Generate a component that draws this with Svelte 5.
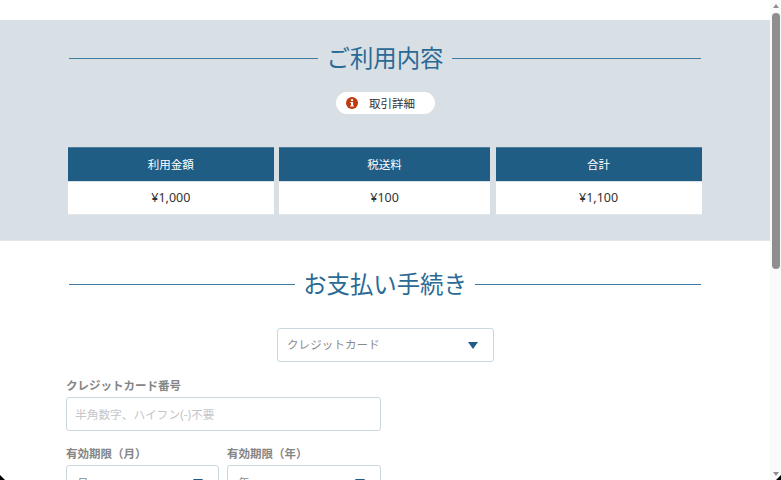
<script>
  const cells = [
    { head: '利用金額', value: '¥1,000' },
    { head: '税送料', value: '¥100' },
    { head: '合計', value: '¥1,100' }
  ];
</script>

<div class="window">
  <main class="page">
    <section class="summary">
      <h2 class="title"><span>ご利用内容</span></h2>
      <div class="pill-row">
        <button class="pill">
          <svg width="12" height="12" viewBox="0 0 12 12" aria-hidden="true">
            <circle cx="6" cy="6" r="6" fill="#c0390f" />
            <rect x="4.9" y="2.2" width="2.2" height="1.9" fill="#fff" />
            <path d="M4.2 5h2.9v3.6h.8v1H4.2v-1h.8V6h-.8z" fill="#fff" />
          </svg>
          <span>取引詳細</span>
        </button>
      </div>
      <div class="table">
        {#each cells as c}
          <div class="col">
            <div class="head">{c.head}</div>
            <div class="val">{c.value}</div>
          </div>
        {/each}
      </div>
    </section>

    <section class="pay">
      <h2 class="title"><span>お支払い手続き</span></h2>
      <div class="method">
        <div class="select wide"><span class="muted">クレジットカード</span><i class="arrow big"></i></div>
      </div>
      <div class="form">
        <div class="label">クレジットカード番号</div>
        <div class="input"><span class="ph">半角数字、ハイフン(-)不要</span></div>
        <div class="pair">
          <div>
            <div class="label">有効期限（月）</div>
            <div class="select small"><span class="muted">月</span><i class="arrow"></i></div>
          </div>
          <div>
            <div class="label">有効期限（年）</div>
            <div class="select small"><span class="muted">年</span><i class="arrow"></i></div>
          </div>
        </div>
      </div>
    </section>
  </main>

  <div class="scrollbar">
    <i class="up"></i>
    <div class="thumb"></div>
    <i class="down"></i>
  </div>
  <i class="corner left"></i>
  <i class="corner right"></i>
</div>

<style>
  :global(body) { margin: 0; background: #000; }
  .window {
    position: relative;
    width: 781px;
    height: 480px;
    overflow: hidden;
    background: #fff;
    font-family: "Noto Sans", "Noto Sans CJK JP", sans-serif;
    color: #333;
  }
  .page { width: 770px; padding-top: 20px; }
  .summary {
    background: #d8dfe5;
    height: 221px;
    box-sizing: border-box;
    padding-top: 21px;
    border-bottom: 1px solid #e2e6ea;
  }
  .title {
    display: flex;
    align-items: center;
    gap: 8.3px;
    margin: 0 69px 0 69px;
    font-size: 23.4px;
    font-weight: 400;
    line-height: 34px;
    color: #2a6a94;
  }
  .title::before, .title::after {
    content: "";
    flex: 1;
    height: 1px;
    background: #3f7ba3;
  }
  .pill-row { display: flex; justify-content: center; margin-top: 17px; }
  .pill {
    display: flex;
    align-items: center;
    gap: 11px;
    width: 99px;
    height: 22px;
    margin-left: 1px;
    padding: 0 0 0 10px;
    box-sizing: border-box;
    border: 0;
    border-radius: 11px;
    background: #fff;
    font: inherit;
    font-size: 11.5px;
    color: #333;
  }
  .table {
    display: grid;
    grid-template-columns: 205.6px 211px 206px;
    column-gap: 5.5px;
    margin: 33px 68px 0;
    font-size: 11.5px;
    text-align: center;
  }
  .head {
    height: 34px;
    line-height: 33px;
    background: #1f5d85;
    color: #fff;
    border-top: 1px solid #4d7d9d;
    box-sizing: border-box;
    margin-bottom: 1px;
  }
  .val {
    height: 33px;
    line-height: 31px;
    background: #fff;
    box-sizing: border-box;
    border-bottom: 1px solid #e4e7ea;
    font-size: 12.5px;
  }
  .pay { padding-top: 26px; }
  .method { display: flex; justify-content: center; margin-top: 27px; padding-left: 1px; }
  .select, .input {
    box-sizing: border-box;
    border: 1px solid #c9d8dd;
    border-radius: 3px;
    background: #fff;
    display: flex;
    align-items: center;
    font-size: 11.5px;
  }
  .select { justify-content: space-between; }
  .wide { width: 217px; height: 34px; padding: 0 15px 0 9px; }
  .wide .muted { position: relative; top: -1px; letter-spacing: 0.1px; }
  .small { height: 34px; padding: 0 15px 0 10px; align-items: center; }
  .muted { color: #8b8b8b; }
  .ph { color: #c4c6cb; font-size: 11.7px; position: relative; top: -1px; }
  .arrow {
    width: 0; height: 0;
    border-left: 5px solid transparent;
    border-right: 5px solid transparent;
    border-top: 7px solid #1f5d85;
  }
  .form { width: 315px; margin: 16px 0 0 66px; }
  .label {
    font-size: 11.5px;
    font-weight: 700;
    line-height: 16px;
    color: #858585;
    margin-bottom: 3px;
  }
  .input { height: 34px; padding: 0 8px; }
  .pair {
    display: grid;
    grid-template-columns: 153px 154px;
    column-gap: 8px;
    margin-top: 15px;
  }
  .scrollbar {
    position: absolute;
    right: 0; top: 0; bottom: 0;
    width: 11px;
    background: #fafafa;
    display: flex;
    flex-direction: column;
    align-items: center;
  }
  .thumb {
    width: 8px;
    height: 256px;
    margin-top: 5px;
    border-radius: 4px;
    background: #8e8e8e;
  }
  .up, .down {
    width: 0; height: 0;
    border-left: 3.5px solid transparent;
    border-right: 3.5px solid transparent;
  }
  .up { margin-top: 4px; border-bottom: 4px solid #8e8e8e; }
  .down { position: absolute; bottom: 4px; border-top: 4px solid #8e8e8e; }
  .corner {
    position: absolute;
    bottom: 0;
    width: 5px; height: 5px;
    background: #000;
  }
  .corner.left { left: 0; clip-path: polygon(0 0, 100% 100%, 0 100%); }
  .corner.right { right: 0; clip-path: polygon(100% 0, 100% 100%, 0 100%); }
</style>
